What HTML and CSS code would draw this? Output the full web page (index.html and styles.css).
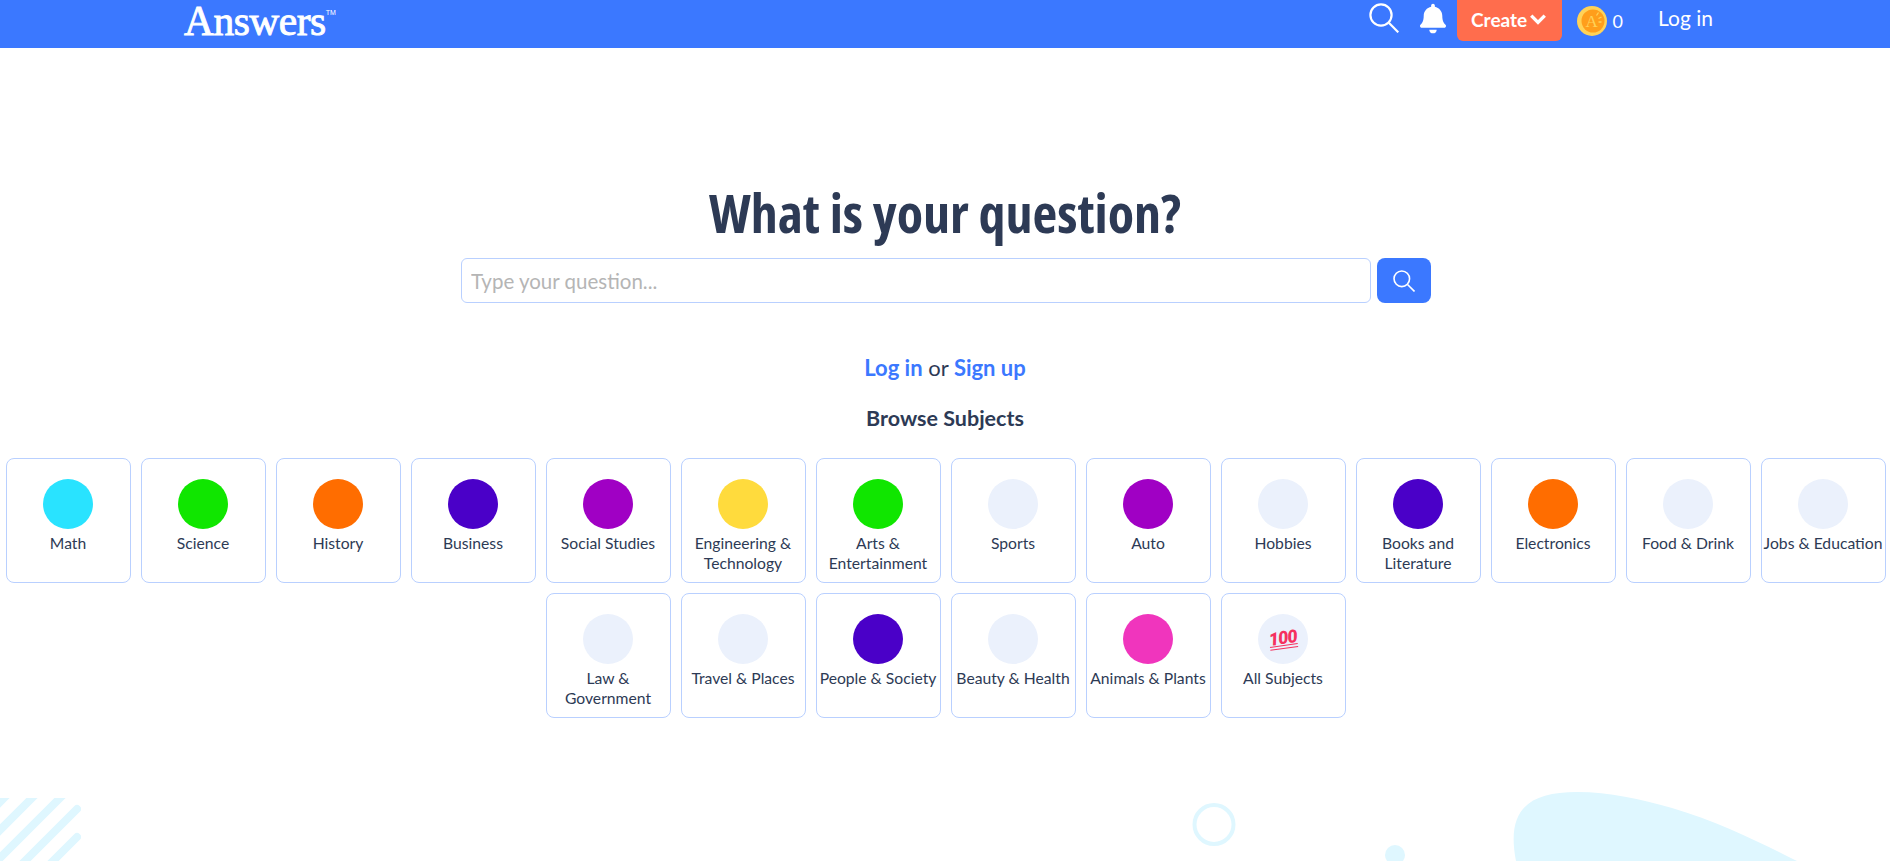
FILE: index.html
```html
<!DOCTYPE html>
<html lang="en">
<head>
<meta charset="utf-8">
<title>Answers</title>
<link rel="stylesheet" href="styles.css">
</head>
<body>
<header class="topbar">
  <a class="logo">Answers<sup class="tm">TM</sup></a>
  <div class="actions">
    <svg class="icon-search" viewBox="0 0 30 30"><circle cx="12" cy="12" r="10.6"/><line x1="19.8" y1="19.8" x2="29.3" y2="29.3"/></svg>
    <svg class="icon-bell" viewBox="0 0 448 512"><path d="M224 512c35.32 0 63.97-28.65 63.97-64H160.03c0 35.35 28.65 64 63.97 64zm215.39-149.71c-19.32-20.76-55.47-51.99-55.47-154.29 0-77.7-54.48-139.9-127.94-155.16V32c0-17.67-14.32-32-31.98-32s-31.98 14.33-31.98 32v20.84C118.56 68.1 64.08 130.3 64.08 208c0 102.3-36.15 133.53-55.47 154.29-6 6.45-8.66 14.16-8.61 21.71.11 16.4 12.98 32 32.1 32h383.8c19.12 0 32-15.6 32.1-32 .05-7.55-2.61-15.27-8.61-21.71z"/></svg>
    <button class="create">Create<svg class="chevron" viewBox="0 0 16 10"><polyline points="2,2 8,8 14,2"/></svg></button>
    <svg class="coin" viewBox="0 0 30 30"><circle cx="15" cy="15" r="15" fill="#ffd257"/><circle cx="16" cy="15" r="11.500" fill="#ff9e1b"/><text x="8.500" y="21" class="coin-a">A</text><path class="coin-rays" d="M19.500 9.500l2-3M21.500 12.500l3-1.500M21.500 16h3"/></svg>
    <span class="coin-count">0</span>
    <a class="login">Log in</a>
  </div>
</header>

<main class="hero">
  <h1 class="title">What is your question?</h1>
  <form class="search">
    <input class="search-input" type="text" placeholder="Type your question...">
    <button class="search-btn" type="button"><svg class="icon-search small" viewBox="0 0 30 30"><circle cx="12" cy="12" r="10.6"/><line x1="19.8" y1="19.8" x2="29.3" y2="29.3"/></svg></button>
  </form>
  <p class="auth"><a>Log in</a> or <a>Sign up</a></p>
  <h2 class="browse">Browse Subjects</h2>
  <div class="subjects">
    <a class="card"><span class="dot cyan"></span><span class="label">Math</span></a>
    <a class="card"><span class="dot green"></span><span class="label">Science</span></a>
    <a class="card"><span class="dot orange"></span><span class="label">History</span></a>
    <a class="card"><span class="dot indigo"></span><span class="label">Business</span></a>
    <a class="card"><span class="dot purple"></span><span class="label">Social Studies</span></a>
    <a class="card"><span class="dot yellow"></span><span class="label">Engineering &amp; Technology</span></a>
    <a class="card"><span class="dot green"></span><span class="label">Arts &amp; Entertainment</span></a>
    <a class="card"><span class="dot pale"></span><span class="label">Sports</span></a>
    <a class="card"><span class="dot purple"></span><span class="label">Auto</span></a>
    <a class="card"><span class="dot pale"></span><span class="label">Hobbies</span></a>
    <a class="card"><span class="dot indigo"></span><span class="label">Books and Literature</span></a>
    <a class="card"><span class="dot orange"></span><span class="label">Electronics</span></a>
    <a class="card"><span class="dot pale"></span><span class="label">Food &amp; Drink</span></a>
    <a class="card"><span class="dot pale"></span><span class="label">Jobs &amp; Education</span></a>
    <a class="card"><span class="dot pale"></span><span class="label">Law &amp; Government</span></a>
    <a class="card"><span class="dot pale"></span><span class="label">Travel &amp; Places</span></a>
    <a class="card"><span class="dot indigo"></span><span class="label">People &amp; Society</span></a>
    <a class="card"><span class="dot pale"></span><span class="label">Beauty &amp; Health</span></a>
    <a class="card"><span class="dot pink"></span><span class="label">Animals &amp; Plants</span></a>
    <a class="card"><span class="dot pale hundred"><span class="hundred-mark">100</span></span><span class="label">All Subjects</span></a>
  </div>
</main>

<svg class="decor-stripes" viewBox="0 0 81 63" aria-hidden="true">
  <line x1="6" y1="-2" x2="-3" y2="7"/>
  <line x1="34" y1="-2" x2="-3" y2="35"/>
  <line x1="62" y1="-2" x2="-3" y2="63"/>
  <line x1="77" y1="11" x2="22" y2="66"/>
  <line x1="77" y1="39" x2="50" y2="66"/>
</svg>
<svg class="decor-shapes" viewBox="1150 780 740 81" aria-hidden="true">
  <circle class="ring" cx="1214" cy="824.500" r="19.500"/>
  <circle class="bubble" cx="1395" cy="855" r="10"/>
  <path class="bubble" d="M1516 861C1506 810 1528 792 1577 792C1610 792 1640 799 1672 808C1720 822 1765 845 1797 861Z"/>
</svg>
</body>
</html>
```

FILE: styles.css
```css
html, body {
  margin: 0;
  height: 100%;
  overflow: hidden;
  background: #fff;
}
body {
  position: relative;
  font-family: Lato, sans-serif;
  color: #2d3a55;
}
.topbar {
  height: 48px;
  background: #3b78ff;
  display: flex;
  justify-content: space-between;
  padding: 0 177px 0 184px;
  color: #fff;
}
.logo {
  font-family: "Liberation Serif", serif;
  font-weight: 400;
  font-size: 41.500px;
  line-height: 43px;
  letter-spacing: -0.5px;
  -webkit-text-stroke: 0.9px #fff;
}
.tm {
  font-family: "Liberation Sans", sans-serif;
  font-size: 7px;
  font-weight: 400;
  vertical-align: 20px;
  line-height: 0;
  letter-spacing: 0;
  -webkit-text-stroke: 0;
}
.actions {
  display: flex;
  align-items: flex-start;
}
.icon-search {
  width: 30px;
  height: 30px;
  margin: 3px 21px 0 0;
  fill: none;
  stroke: #fff;
  stroke-width: 2.2;
}
.icon-search.small {
  width: 22px;
  height: 22px;
  margin: 0;
}
.icon-bell {
  width: 26px;
  height: 31px;
  margin: 3px 11px 0 0;
  fill: #fff;
}
.create {
  width: 105px;
  height: 41px;
  border: 0;
  border-radius: 0 0 6px 6px;
  background: #ff6d4d;
  color: #fff;
  font: 700 19px Lato, sans-serif;
  display: flex;
  align-items: center;
  justify-content: center;
  gap: 2px;
  padding: 0 0 3px;
  margin-right: 15px;
}
.chevron {
  width: 18px;
  height: 12px;
  fill: none;
  stroke: #fff;
  stroke-width: 3;
}
.coin {
  width: 30px;
  height: 30px;
  margin-top: 6px;
}
.coin-a {
  font-family: "Liberation Serif", serif;
  font-size: 17px;
  fill: #ffd257;
}
.coin-rays {
  stroke: #ffd257;
  stroke-width: 1.300;
  fill: none;
}
.coin-count {
  font-size: 18px;
  line-height: 24px;
  margin: 9px 35px 0 6px;
}
.login {
  font-size: 21px;
  line-height: 28px;
  margin-top: 4px;
}
.hero {
  display: flex;
  flex-direction: column;
  align-items: center;
}
.title {
  margin: 134px 0 0;
  font-family: "Open Sans", sans-serif;
  font-stretch: 75%;
  font-weight: 700;
  font-size: 54px;
  line-height: 60px;
  color: #2d3a55;
}
.search {
  display: flex;
  gap: 6px;
  margin: 16px 0 0 2px;
}
.search-input {
  box-sizing: border-box;
  width: 910px;
  height: 45px;
  padding: 0 9px;
  border: 1px solid #b9d0ff;
  border-radius: 6px;
  font: 20.500px Lato, sans-serif;
  outline: none;
}
.search-input::placeholder {
  color: #b5b5b5;
}
.search-btn {
  width: 54px;
  height: 45px;
  border: 0;
  border-radius: 8px;
  background: #3b78ff;
  display: flex;
  align-items: center;
  justify-content: center;
  padding: 0;
}
.auth {
  margin: 50px 0 0;
  font-size: 22px;
  line-height: 30px;
}
.auth a {
  color: #3b78ff;
  font-weight: 700;
}
.browse {
  margin: 20px 0 0;
  font-size: 21.500px;
  line-height: 30px;
  font-weight: 700;
}
.subjects {
  margin-top: 20px;
  width: 1890px;
  display: flex;
  flex-wrap: wrap;
  justify-content: center;
}
.card {
  box-sizing: border-box;
  width: 125px;
  height: 125px;
  margin: 5px 4px 5px 6px;
  padding: 20px 1px 0 0;
  border: 1px solid #b9d0ff;
  border-radius: 8px;
  display: flex;
  flex-direction: column;
  align-items: center;
  text-align: center;
}
.dot {
  width: 50px;
  height: 50px;
  border-radius: 50%;
  flex: none;
  margin-bottom: 4px;
}
.label {
  font-size: 15.700px;
  line-height: 20px;
}
.cyan { background: #29e3ff; }
.green { background: #10e600; }
.orange { background: #ff6d00; }
.indigo { background: #4a00c8; }
.purple { background: #a000c4; }
.yellow { background: #ffdb3d; }
.pale { background: #ebf1fc; }
.pink { background: #f035bd; }
.hundred {
  display: flex;
  align-items: center;
  justify-content: center;
}
.hundred-mark {
  font-family: Roboto, sans-serif;
  font-weight: 900;
  font-style: italic;
  font-size: 18px;
  line-height: 15px;
  letter-spacing: -0.8px;
  color: #f5315f;
  border-bottom: 4px double #f5315f;
  transform: rotate(-8deg);
}
.decor-stripes {
  position: absolute;
  left: 0;
  bottom: 0;
  width: 81px;
  height: 63px;
  overflow: hidden;
}
.decor-stripes line {
  stroke: #dff7ff;
  stroke-width: 8;
  stroke-linecap: round;
}
.decor-shapes {
  position: absolute;
  right: 0;
  bottom: 0;
  width: 740px;
  height: 81px;
}
.ring {
  fill: none;
  stroke: #dff7ff;
  stroke-width: 4;
}
.bubble {
  fill: #dff7ff;
}
```
